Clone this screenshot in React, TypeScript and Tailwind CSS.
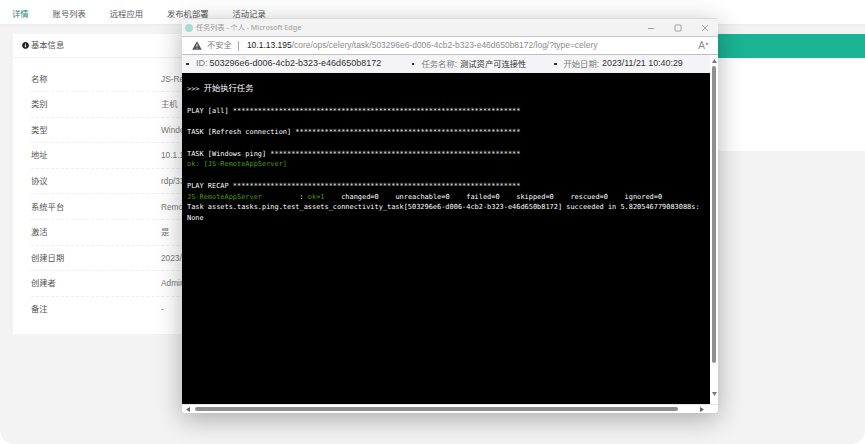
import React from 'react';
import { FaInfoCircle } from 'react-icons/fa';

const TABS = ['详情', '账号列表', '远程应用', '发布机部署', '活动记录'];

const ROWS = [
  ['名称', 'JS-RemoteAppServer'],
  ['类别', '主机'],
  ['类型', 'Windows'],
  ['地址', '10.1.13.195'],
  ['协议', 'rdp/3389'],
  ['系统平台', 'RemoteAppHost'],
  ['激活', '是'],
  ['创建日期', '2023/11/21 10:40:29'],
  ['创建者', 'Administrator'],
  ['备注', '-'],
];

const stars = (n: number) => '*'.repeat(n);

const Terminal: React.FC = () => (
  <div className="flex-1 bg-black pl-[5px] pt-[10px] overflow-hidden font-['DejaVu_Sans_Mono','Noto_Sans_CJK_SC',monospace] text-[6.93px] leading-[10.75px] text-white whitespace-pre">
    <div>
      {'>>> '}
      <span className="text-[8.3px]">开始执行任务</span>
    </div>
    <div>&nbsp;</div>
    <div>PLAY [all] {stars(69)}</div>
    <div>&nbsp;</div>
    <div>TASK [Refresh connection] {stars(54)}</div>
    <div>&nbsp;</div>
    <div>TASK [Windows ping] {stars(60)}</div>
    <div className="text-[#4a9e14]">ok: [JS-RemoteAppServer]</div>
    <div>&nbsp;</div>
    <div>PLAY RECAP {stars(69)}</div>
    <div>
      <span className="text-[#4a9e14]">JS-RemoteAppServer</span>
      {'         : '}
      <span className="text-[#4a9e14]">ok=1</span>
      {'    changed=0    unreachable=0    failed=0    skipped=0    rescued=0    ignored=0'}
    </div>
    <div>
      Task assets.tasks.ping.test_assets_connectivity_task[503296e6-d006-4cb2-b323-e46d650b8172] succeeded in 5.820546779083088s:
    </div>
    <div>None</div>
  </div>
);

const TaskWindow: React.FC = () => (
  <div className="absolute left-[182px] top-[18px] w-[536px] h-[395px] flex flex-col bg-white rounded-[4px] overflow-hidden border-t border-[#d8d8d8] shadow-[0_6px_26px_rgba(0,0,0,0.3)]">
    {/* title bar */}
    <div className="h-[18px] shrink-0 bg-[#f3f3f3] flex items-center border-b border-[#c9c9c9]">
      <span className="ml-[3px] w-[8px] h-[8px] rounded-full bg-[#a8dccf]" />
      <span className="ml-[3px] text-[7.15px] text-[#9a9a9a] font-['Noto_Sans','Noto_Sans_CJK_SC',sans-serif]">任务列表 - 个人 - Microsoft Edge</span>
      <svg className="ml-auto" width="8" height="8" viewBox="0 0 8 8">
        <path d="M1 4.5h6" stroke="#8a8a8a" strokeWidth="0.8" />
      </svg>
      <svg className="ml-[19px]" width="8" height="8" viewBox="0 0 8 8">
        <rect x="1" y="1" width="6" height="6" rx="1" fill="none" stroke="#8a8a8a" strokeWidth="0.8" />
      </svg>
      <svg className="ml-[19px] mr-[9px]" width="8" height="8" viewBox="0 0 8 8">
        <path d="M1 1l6 6M7 1l-6 6" stroke="#8a8a8a" strokeWidth="0.8" />
      </svg>
    </div>
    {/* address bar */}
    <div className="h-[18px] shrink-0 bg-white flex items-center border-b border-[#bdbdbd] text-[8.3px]">
      <svg className="ml-[10px]" width="10" height="9" viewBox="0 0 10 9">
        <path d="M5 0.3L9.8 8.7H0.2z" fill="#555" />
        <path d="M5 3v3M5 6.8v0.9" stroke="#fff" strokeWidth="0.8" />
      </svg>
      <span className="ml-[5px] text-[#808080]">不安全</span>
      <span className="ml-[6px] w-px h-[10px] bg-[#aaa]" />
      <span className="ml-[8px] text-[8.47px] text-[#8c8c8c]">
        <span className="text-[#222]">10.1.13.195</span>
        /core/ops/celery/task/503296e6-d006-4cb2-b323-e46d650b8172/log/?type=celery
      </span>
      <span className="ml-auto text-[10px] leading-none text-[#8a8a8a]">A</span>
      <svg className="mr-[9px] mb-[4px]" width="4" height="4" viewBox="0 0 4 4">
        <path d="M0.5 0.5L3.5 1.5L1.5 3.5z" fill="#8a8a8a" />
      </svg>
    </div>
    {/* page */}
    <div className="flex-1 flex min-h-0">
      <div className="flex-1 flex flex-col min-w-0">
        <div className="h-[18px] shrink-0 bg-[#f4f4f6] flex items-center text-[8.3px] text-[#7d7d7d]">
          <span className="ml-[4px] w-[2.5px] h-[2.5px] bg-[#333]" />
          <span className="ml-[7.5px] text-[9px]">ID:</span>
          <span className="ml-[2px] w-[202px] text-[9px] text-[#333]">503296e6-d006-4cb2-b323-e46d650b8172</span>
          <span className="w-[2.5px] h-[2.5px] bg-[#333]" />
          <span className="ml-[7.5px]">任务名称:</span>
          <span className="ml-[3px] w-[94px] text-[#333]">测试资产可连接性</span>
          <span className="w-[2.5px] h-[2.5px] bg-[#333]" />
          <span className="ml-[7px]">开始日期:</span>
          <span className="ml-[3px] text-[8.9px] text-[#333]">2023/11/21 10:40:29</span>
        </div>
        <Terminal />
      </div>
      {/* vertical scrollbar */}
      <div className="w-[8px] shrink-0 bg-white flex flex-col items-center pt-[4px]">
        <svg width="5" height="4" viewBox="0 0 5 4">
          <path d="M2.5 0L5 4H0z" fill="#777" />
        </svg>
        <div className="mt-[3px] w-[4.5px] h-[297px] rounded-full bg-[#8f8f8f]" />
        <svg className="mt-[29px]" width="5" height="4" viewBox="0 0 5 4">
          <path d="M0 0h5L2.5 4z" fill="#777" />
        </svg>
      </div>
    </div>
    {/* horizontal scrollbar */}
    <div className="h-[9px] shrink-0 bg-white flex items-center border-t border-[#e5e5e5]">
      <svg className="ml-[4px]" width="4" height="5" viewBox="0 0 4 5">
        <path d="M4 0v5L0 2.5z" fill="#666" />
      </svg>
      <div className="ml-[5px] w-[483px] h-[4.5px] rounded-full bg-[#8f8f8f]" />
      <svg className="ml-[22px]" width="4" height="5" viewBox="0 0 4 5">
        <path d="M0 0v5l4-2.5z" fill="#666" />
      </svg>
    </div>
  </div>
);

const App: React.FC = () => (
  <div className="relative w-[865px] h-[444px] bg-white overflow-hidden flex flex-col font-['Liberation_Sans','Noto_Sans_CJK_SC',sans-serif] text-[8.3px] text-[#676a6c]">
    <div className="h-[24px] shrink-0 flex gap-[24px] pl-[12px]">
      {TABS.map((tab, i) => (
        <div
          key={tab}
          className={i === 0 ? 'pt-[8px] h-[25.5px] border-b-2 border-[#1ab394] text-[#2a7f70]' : 'pt-[8px] text-[#555]'}
        >
          {tab}
        </div>
      ))}
    </div>
    <div className="flex-1 bg-[#f3f3f4] border-t-2 border-[#ececf1] rounded-b-[14px] pt-[8px] px-[13px] flex items-start gap-[8px]">
      <div className="w-[480px] h-[300px] bg-white shrink-0">
        <div className="h-[24px] flex items-center border-b border-[#f0f0f0] pl-[9px] gap-[2px] text-[#555]">
          <FaInfoCircle className="w-[7px] h-[7px] text-[#222]" />
          <span>基本信息</span>
        </div>
        <div className="px-[18px] pt-[8.5px]">
          {ROWS.map(([label, value], i) => (
            <div
              key={label}
              className={`h-[25.6px] flex items-center ${i < ROWS.length - 1 ? 'border-b border-dashed border-[#eeeeee]' : ''}`}
            >
              <span className="w-[130px] text-[#555]">{label}</span>
              <span className="text-[#777]">{value}</span>
            </div>
          ))}
        </div>
      </div>
      <div className="flex-1 mr-[-13px] h-[117px] bg-white">
        <div className="h-[24px] bg-[#1ab394]" />
      </div>
    </div>
    <TaskWindow />
  </div>
);

export default App;
